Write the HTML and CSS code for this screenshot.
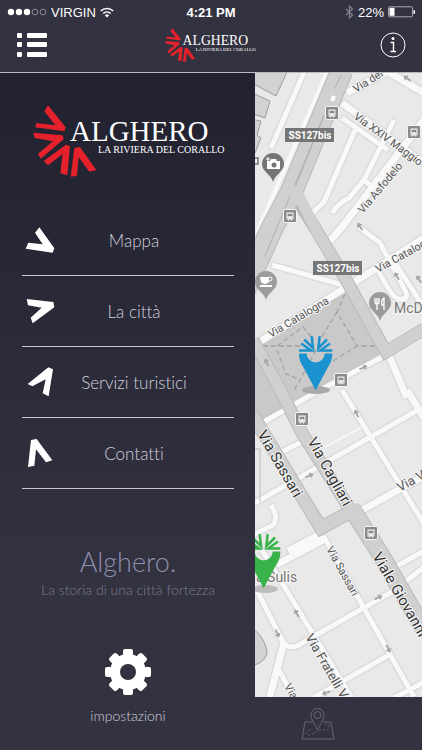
FILE: index.html
```
<!DOCTYPE html>
<html lang="it">
<head>
  <meta charset="UTF-8" />
  <meta name="viewport" content="width=device-width, initial-scale=1.0" />
  <title>Alghero</title>
  <link rel="stylesheet" href="styles.css">
</head>
<body>

  <!-- Shared shapes -->
  <svg class="defs" width="0" height="0" aria-hidden="true">
    <symbol id="logo" viewBox="0 0 194 74">
      <g transform="scale(0.3333) translate(-39 -31)" fill="#e5222b">
        <path d="M84 32 137 98 133 110 45 98 50 85 106 92 73 50z" />
        <path d="M40 114 128 122 131 134 62 192 54 177 99 140 44 130z" />
        <path d="M138 150 150 155 142 242 121 236 128 178 84 212 71 199z" />
        <path d="M163 160 180 157 229 226 208 231 176 188 171 243 152 246z" />
      </g>
      <text class="logo-name" x="37" y="36">ALGHERO</text>
      <text class="logo-sub" x="65" y="48">LA RIVIERA DEL CORALLO</text>
    </symbol>
    <symbol id="bus" viewBox="0 0 14 14">
      <rect x=".5" y=".5" width="13" height="13" rx="1.5" fill="#8a8a8a" stroke="#f4f4f4" />
      <path d="M3.5 3.5h7v7h-1.500v1h-1v-1h-2v1h-1v-1h-1.500z" fill="#f4f4f4" />
      <path d="M4.500 4.700h5v2.600h-5zM4.500 8.500h1v1h-1zM8.500 8.500h1v1h-1z" fill="#8a8a8a" />
    </symbol>
    <symbol id="arrow" viewBox="0 0 10 12">
      <path d="M5 0 9 5H6.200v6H3.800V5H1z" fill="#a5a5a5" />
    </symbol>
    <symbol id="pin" viewBox="0 0 168 200">
      <path d="M27 85H50A27 27 0 0 0 104 85H127Q128 106 113 128L77 195 41 128Q26 106 27 85z" fill="currentColor" />
      <path d="M27 76H63L34 55M43 43 69 69 65 33M89 33 85 69 111 43M120 55 91 76H127" fill="none" stroke="currentColor" stroke-width="7.500" />
    </symbol>
  </svg>

  <header class="header">
    <div class="status">
      <div class="carrier">
        <svg width="40" height="10" viewBox="0 0 40 10">
          <g fill="#fff"><circle cx="4" cy="5" r="3.200" /><circle cx="12" cy="5" r="3.200" /><circle cx="20" cy="5" r="3.200" /></g>
          <g fill="none" stroke="#a0a0aa" stroke-width=".8"><circle cx="28" cy="5" r="2.900" /><circle cx="36" cy="5" r="2.900" /></g>
        </svg>
        <span>VIRGIN</span>
        <svg width="14" height="11" viewBox="0 0 14 11" fill="none" stroke="#fff" stroke-width="1.700">
          <path d="M.8 4a9 9 0 0 1 12.400 0M3.200 6.500a5.500 5.500 0 0 1 7.600 0" />
          <path d="M7 10.500 4.900 8.400a3 3 0 0 1 4.200 0z" fill="#fff" stroke="none" />
        </svg>
      </div>
      <strong class="clock">4:21 PM</strong>
      <div class="power">
        <svg width="9" height="14" viewBox="0 0 9 14" fill="none" stroke="#85858f" stroke-width="1.100">
          <path d="M1 4 7.500 10 4.500 13V1L7.500 4 1 10" />
        </svg>
        <span>22%</span>
        <svg width="27" height="12" viewBox="0 0 27 12">
          <rect x=".5" y=".8" width="24" height="10" rx="1" fill="none" stroke="#a8a8b0" />
          <path d="M1.500 1.800h5v8h-5z" fill="#fff" />
          <path d="M25.500 4a2 2 0 0 1 0 4z" fill="#fff" />
        </svg>
      </div>
    </div>
    <div class="nav">
      <button class="icon-btn" aria-label="Menu">
        <svg width="32" height="26" viewBox="0 0 32 26" fill="#fff">
          <rect x="1" y="1" width="5" height="5" rx="1" /><rect x="11" y="1" width="20" height="5" rx="1" />
          <rect x="1" y="10" width="5" height="5" rx="1" /><rect x="11" y="10" width="20" height="5" rx="1" />
          <rect x="1" y="20" width="5" height="5" rx="1" /><rect x="11" y="20" width="20" height="5" rx="1" />
        </svg>
      </button>
      <svg class="logo-small" role="img" aria-label="Alghero"><use href="#logo" /></svg>
      <button class="icon-btn" aria-label="Informazioni">
        <svg width="26" height="26" viewBox="0 0 26 26">
          <circle cx="13" cy="13" r="12" fill="none" stroke="#fff" />
          <circle cx="13" cy="6.500" r="1.500" fill="#fff" />
          <path d="M10.500 10.500h3v8.500M10.500 19.500h5.500" fill="none" stroke="#fff" stroke-width="1.400" />
        </svg>
      </button>
    </div>
  </header>

  <div class="layout">
    <aside class="sidebar">
      <svg class="logo-big" role="img" aria-label="Alghero, la riviera del corallo"><use href="#logo" /></svg>

      <nav class="menu">
        <a href="#mappa">
          <svg viewBox="45 46 90 90"><path d="M88 53 133 116 128 129 47 117 55 99 98 104 75 69z" /></svg>
          <span>Mappa</span>
        </a>
        <a href="#citta">
          <svg viewBox="45 256 90 90"><path d="M50 265 130 274 133 290 68 338 62 321 95 291 54 284z" /></svg>
          <span>La città</span>
        </a>
        <a href="#servizi">
          <svg viewBox="45 49 90 90"><path d="M53 100 115 50 129 56 116 137 98 128 107 86 67 107z" /></svg>
          <span>Servizi turistici</span>
        </a>
        <a href="#contatti">
          <svg viewBox="45 260 90 90"><path d="M63 266 80 263 127 327 108 333 78 294 73 343 54 347z" /></svg>
          <span>Contatti</span>
        </a>
      </nav>

      <div class="tagline">
        <h1>Alghero.</h1>
        <p>La storia di una città fortezza</p>
      </div>

      <button class="settings">
        <svg width="46" height="46" viewBox="-23 -23 46 46" fill="#fff">
          <g id="teeth">
            <rect x="-5" y="-23" width="10" height="46" rx="2" />
            <rect x="-23" y="-5" width="46" height="10" rx="2" />
          </g>
          <use href="#teeth" transform="rotate(45)" />
          <circle r="18" />
          <circle r="8" fill="#333240" />
        </svg>
        <span>impostazioni</span>
      </button>
    </aside>

    <div class="content">
      <main class="map">
        <svg viewBox="255 73 167 624" preserveAspectRatio="xMinYMin slice">
          <rect x="255" y="73" width="600" height="900" fill="#e9e9e9" />

          <!-- Buildings and park -->
          <g fill="#d2d2d2" stroke="#8c8c8c" stroke-width=".8">
            <path d="M250 70H288L276 96 250 82z" />
            <path d="M250 92 270 101 265 118 250 113z" />
            <path d="M250 119 261 121 257 135 261 138 255 153H250z" />
            <path d="M250 628 Q262 632 267 650 Q268 660 255 665H250z" />
          </g>
          <path d="M255 348 345 290 384 352 255 426z" fill="#c9c9c9" />
          <g fill="none" stroke="#a3a3a3" stroke-width="1.300" stroke-dasharray="5 3">
            <path d="M345 294 337 312 357 346 377 346M337 312 320 340M255 346H300M277 346 303 327 314 340M277 350 286 374 298 379M333 361 357 346M316 350 294 391" />
          </g>

          <!-- White streets -->
          <g class="streets">
            <g class="street-lg">
              <path d="M342 103 422 162" />
              <path d="M347 93 388 71M385 70 424 93" />
              <path d="M424 120 342 227 330 241" />
              <path d="M253 346 345 288 424 238" />
              <path d="M388 353 407 398M407 390 424 418" />
              <path d="M362 510 424 476" />
              <path d="M288 551 322 533M276 565 327 538" />
              <path d="M284 642Q277 670 269 700" />
            </g>
            <g class="street">
              <path d="M305 70 271 148M342 118 388 150M355 130 324 202 312 213" />
              <path d="M394 120 364 180 349 198Q338 203 332 213M364 180 376 190" />
              <path d="M359 227 380 243 405 290Q410 300 399 299 392 298 377 268M390 255 424 308" />
              <path d="M272 265 343 285" />
              <path d="M390 353 318 391 253 428" />
              <path d="M342 390 424 524M253 504 418 410M279 453 304 441" />
              <path d="M324 537 414 697M424 567 395 590 297 646Q288 649 283 642L254 585" />
              <path d="M262 550 352 698M279 670 295 700M389 655 313 698M424 682 394 698M395 567 424 551" />
              <path d="M271 505Q279 517 273 525L253 535" />
            </g>
          </g>
          <path d="M325 447 362 427" stroke="#f5f5f5" stroke-width="2" />
          <path d="M328 70 257 232" stroke="#f8f8f8" stroke-width="4" />
          <path d="M255 449H260V502" stroke="#bbb" fill="none" />

          <!-- Main roads -->
          <g fill="none" stroke-linejoin="miter">
            <g stroke="#bababa">
              <path d="M342 70 291 193 272 228 240 300" stroke-width="23" />
              <path d="M296 198 315 228 349 285 386 352 424 329" stroke-width="13" />
              <path d="M253 340 282 393 302 433 355 517" stroke-width="13" />
              <path d="M253 416 321 528 350 512" stroke-width="14" />
              <path d="M352 509 384 560 424 630" stroke-width="18" />
            </g>
            <g stroke="#d0d0d0">
              <path d="M342 70 291 193 272 228 240 300" stroke-width="21" />
              <path d="M296 190 315 228 349 285 386 352 424 329" stroke-width="11" />
              <path d="M253 340 282 393 302 433 355 517" stroke-width="11" />
              <path d="M253 416 321 528 352 511" stroke-width="12" />
              <path d="M351 507 384 560 424 630" stroke-width="16" />
            </g>
            <path d="M341 75 335 88M324 116 294 187M296 185 324 115M290 196 265 256" stroke="#b0b0b0" />
            <path d="M334 96 332 101" stroke="#fff" stroke-width="4" />
          </g>

          <!-- One-way arrows -->
          <use href="#arrow" width="8" height="10" transform="translate(401 79) rotate(-55)" />
          <use href="#arrow" width="8" height="10" transform="translate(354 225) rotate(-35)" />
          <use href="#arrow" width="8" height="10" transform="translate(391 274) rotate(-30)" />
          <use href="#arrow" width="8" height="10" transform="translate(413 277) rotate(-30)" />
          <use href="#arrow" width="8" height="10" transform="translate(261 360) rotate(-25)" />
          <use href="#arrow" width="8" height="10" transform="translate(366 362) rotate(65)" />
          <use href="#arrow" width="8" height="10" transform="translate(351 411) rotate(-25)" />
          <use href="#arrow" width="8" height="10" transform="translate(312 470) rotate(65)" />
          <use href="#arrow" width="8" height="10" transform="translate(381 592) rotate(65)" />
          <use href="#arrow" width="8" height="10" transform="translate(291 611) rotate(-28)" />
          <use href="#arrow" width="8" height="10" transform="translate(283 636) rotate(155)" />
          <use href="#arrow" width="8" height="10" transform="translate(394 651) rotate(152)" />
          <use href="#arrow" width="8" height="10" transform="translate(323 698) rotate(-110)" />

          <use href="#bus" x="325" y="106" width="14" height="14" />
          <use href="#bus" x="407" y="125" width="14" height="14" />
          <use href="#bus" x="283" y="209" width="14" height="14" />
          <use href="#bus" x="334" y="373" width="14" height="14" />
          <use href="#bus" x="295" y="412" width="14" height="14" />
          <use href="#bus" x="364" y="526" width="14" height="14" />
          <path d="M255 158h3v6h-3" fill="none" stroke="#777" stroke-width="1.500" />

          <!-- Street names -->
          <g class="label label-sm">
            <text transform="translate(356 93) rotate(-32)">Via del</text>
            <text transform="translate(353 118) rotate(36)">Via XXIV Maggio</text>
            <text transform="translate(363 214) rotate(-50)">Via Asfodelo</text>
            <text transform="translate(271 338) rotate(-31)">Via Catalogna</text>
            <text transform="translate(378 273) rotate(-29)">Via Catalogna</text>
            <text transform="translate(326 549) rotate(61)">Via Sassari</text>
            <text transform="translate(284 686) rotate(61)">Via</text>
          </g>
          <g class="label label-lg">
            <text transform="translate(257 434) rotate(60)">Via Sassari</text>
            <text transform="translate(307 441) rotate(61)">Via Cagliari</text>
            <text transform="translate(372 556) rotate(60)">Viale Giovanni</text>
          </g>
          <g class="label label-md">
            <text transform="translate(400 492) rotate(-29)">Via V</text>
            <text transform="translate(305 637) rotate(60)">Via Fratelli Volpi</text>
          </g>
          <g class="label place">
            <text x="394" y="313">McDonald's</text>
            <text x="256" y="582">a Sulis</text>
          </g>

          <g class="road-tag">
            <rect x="285" y="128" width="49" height="14" />
            <rect x="313" y="261" width="49" height="14" />
            <text x="310" y="139">SS127bis</text>
            <text x="338" y="272">SS127bis</text>
          </g>

          <!-- Points of interest -->
          <g fill="#757575">
            <path d="M262 164a11 11 0 1 1 22 0C284 172 275 174 273 182 271 174 262 172 262 164z" />
            <path d="M267 161h3l1-2h5l1 2h3v8h-13z" fill="#fff" />
            <circle cx="274" cy="165" r="2.500" />
            <path d="M266 159h4M268 157v4" stroke="#fff" />
          </g>
          <g fill="#9b9b9b">
            <path d="M255 282a11 11 0 1 1 22 0C277 290 268 292 266 300 264 292 255 290 255 282z" />
            <path d="M260 277h9v5q-4 4-8 0zM260 285h12v2h-12z" fill="#fff" />
            <circle cx="270" cy="279" r="2" fill="none" stroke="#fff" />
            <path d="M369 303a11 11 0 1 1 22 0C391 311 382 313 380 321 378 313 369 311 369 303z" />
            <path d="M375 298v4q0 2 2 2v6M377 298v6M379 298v4q0 2-2 2M384 310v-12q-3 2-2 7h2" fill="none" stroke="#fff" stroke-width="1.300" />
          </g>
          <ellipse cx="316" cy="390" rx="14" ry="4" fill="#aaa" />
          <ellipse cx="265" cy="589" rx="13" ry="4" fill="#bdbdbd" />
          <use class="pin-blue" href="#pin" x="290" y="325" width="56" height="67" />
          <use class="pin-green" href="#pin" x="238" y="523" width="56" height="67" />
        </svg>
      </main>

      <nav class="tabs">
        <a href="#mappa" aria-label="Mappa">
          <svg width="34" height="34" viewBox="0 0 34 34" fill="none" stroke="#666674">
            <path d="M11 15H4L1 32H33L30 15H22" />
            <path d="M16.500 23C13 16 10 12 10 8a6.500 6.500 0 0 1 13 0c0 4-3 8-6.500 15z" />
            <circle cx="16.500" cy="8" r="3.500" />
            <path d="M16 24Q12 28 7 28 3 26 7 24L11 22M18 24Q21 22 23 23 29 23 28 18L24 17" stroke-dasharray="2 2" />
          </svg>
        </a>
      </nav>
    </div>
  </div>

</body>
</html>
```
FILE: styles.css
```
* {
  box-sizing: border-box;
}

body {
  margin: 0;
  min-height: 100vh;
  display: flex;
  flex-direction: column;
  background: #333240;
  color: #fff;
  font-family: Lato, sans-serif;
  font-variant-ligatures: none;
}

a {
  color: inherit;
  text-decoration: none;
}

button {
  padding: 0;
  border: none;
  background: none;
  color: inherit;
  font-family: inherit;
  cursor: pointer;
}

svg {
  display: block;
}

.defs {
  position: absolute;
}

/* Header */
.header {
  background: #333240;
  border-bottom: 1px solid #b9b9c4;
}

.status {
  display: grid;
  grid-template-columns: 1fr auto 1fr;
  align-items: center;
  height: 24px;
  padding: 0 7px;
  font-family: "Liberation Sans", Arial, sans-serif;
  font-size: 13px;
}

.carrier,
.power {
  display: flex;
  align-items: center;
  gap: 4px;
}

.power {
  justify-content: flex-end;
}

.nav {
  display: grid;
  grid-template-columns: 1fr auto 1fr;
  align-items: center;
  height: 48px;
  padding: 0 16px 6px;
}

.nav .icon-btn:last-child {
  justify-self: end;
}

.nav .icon-btn:first-child {
  justify-self: start;
}

.logo-small {
  width: 92px;
  height: 35px;
}

.logo-name,
.logo-sub {
  font-family: "Liberation Serif", "Times New Roman", serif;
  fill: #fff;
}

.logo-name {
  font-size: 29px;
}

.logo-sub {
  font-size: 10px;
}

/* Layout */
.layout {
  flex: 1;
  display: flex;
}

.sidebar {
  flex: 0 0 255px;
  display: flex;
  flex-direction: column;
  padding: 32px 21px 24px 22px;
  background: linear-gradient(#212130, #333240 75%);
}

.content {
  flex: 1;
  min-width: 0;
  display: flex;
  flex-direction: column;
}

.logo-big {
  width: 194px;
  height: 74px;
  margin-left: 11px;
}

/* Menu */
.menu {
  margin-top: 26px;
  color: #d0d0dc;
}

.menu a {
  display: grid;
  grid-template-columns: 34px 1fr 22px;
  align-items: center;
  height: 71px;
  border-bottom: 1px solid #c8c8d2;
  font-size: 17px;
  font-weight: 300;
  text-align: center;
}

.menu svg {
  width: 30px;
  height: 30px;
  margin-left: 3px;
  fill: #fff;
}

.tagline {
  margin-top: 55px;
  text-align: center;
}

.tagline h1 {
  margin: 0;
  color: #8e8eae;
  font-size: 27px;
  font-weight: 300;
  line-height: 36px;
}

.tagline p {
  margin: 0;
  color: #7c7c94;
  font-size: 14px;
  font-weight: 300;
  line-height: 20px;
  white-space: nowrap;
}

.settings {
  display: flex;
  flex-direction: column;
  align-items: center;
  gap: 12px;
  align-self: center;
  margin-top: 49px;
  color: #d0d0dc;
  font-size: 14px;
  font-weight: 300;
}

/* Map */
.map {
  position: relative;
  flex: 1;
  overflow: hidden;
  background: #e9e9e9;
}

.map > svg {
  position: absolute;
  inset: 0;
  width: 100%;
  height: 100%;
}

.streets {
  fill: none;
  stroke: #f9f9f9;
  stroke-linejoin: round;
  filter: drop-shadow(0 0 1px #bbb);
}

.street-lg {
  stroke-width: 7px;
}

.street {
  stroke-width: 5px;
}

.label {
  font-family: Roboto, sans-serif;
  fill: #555;
  stroke: #f4f4f4;
  stroke-width: 2px;
  paint-order: stroke;
}

.label-sm {
  font-size: 11px;
}

.label-md {
  font-size: 13px;
}

.label-lg {
  font-size: 15px;
  fill: #333;
}

.place {
  font-size: 14px;
  fill: #777;
}

.road-tag {
  fill: #757575;
}

.road-tag text {
  fill: #fff;
  font-family: Roboto, sans-serif;
  font-size: 10px;
  font-weight: 700;
  text-anchor: middle;
}

.pin-blue {
  color: #1b92d0;
}

.pin-green {
  color: #37b34a;
}

.tabs {
  display: flex;
  align-items: center;
  justify-content: center;
  height: 53px;
  padding-right: 42px;
  background: #333240;
}
```
